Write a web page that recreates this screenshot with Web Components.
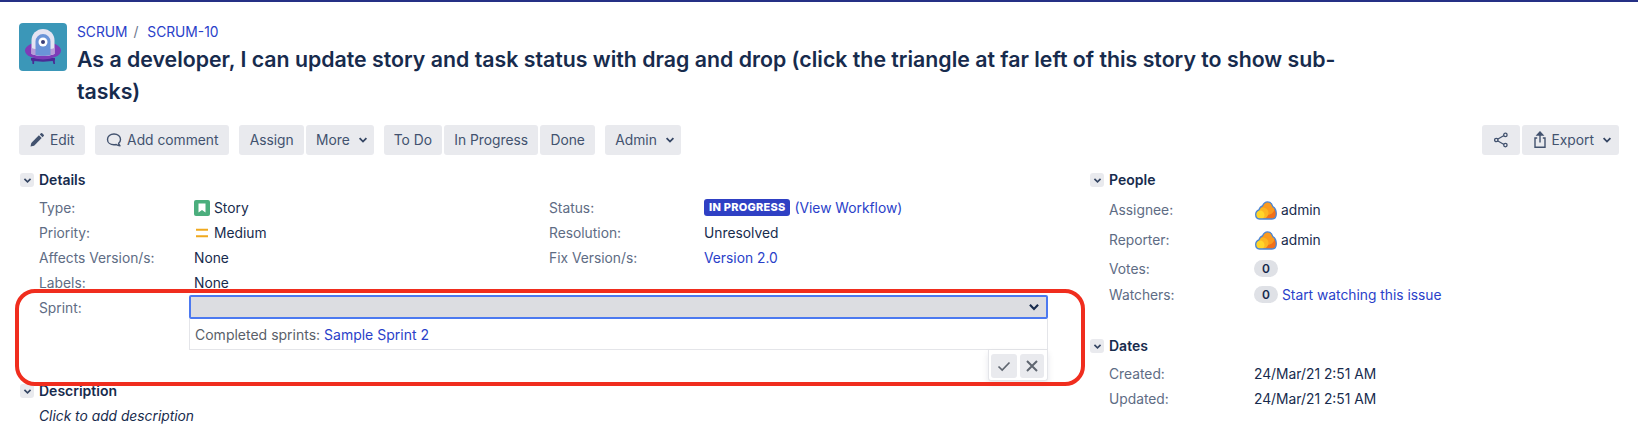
<!DOCTYPE html>
<html lang="en">
<head>
<meta charset="UTF-8">
<title>SCRUM-10</title>
<style>
  html, body { margin: 0; background: #fff; }
  body {
    position: relative;
    height: 435px;
    overflow: hidden;
    font: 13.8px/20px Inter, "Liberation Sans", sans-serif;
    color: #172b4d;
  }
</style>
</head>
<body>
<issue-page>
  <issue-header project="SCRUM" issue="SCRUM-10">As a developer, I can update story and task status with drag and drop (click the triangle at far left of this story to show sub-tasks)</issue-header>

  <issue-toolbar>
    <op-group>
      <op-button icon="edit">Edit</op-button>
    </op-group>
    <op-group>
      <op-button icon="comment">Add comment</op-button>
    </op-group>
    <op-group>
      <op-button>Assign</op-button>
      <op-button caret>More</op-button>
    </op-group>
    <op-group>
      <op-button>To Do</op-button>
      <op-button>In Progress</op-button>
      <op-button>Done</op-button>
    </op-group>
    <op-group>
      <op-button caret>Admin</op-button>
    </op-group>
    <op-group slot="right">
      <op-button icon="share"></op-button>
      <op-button icon="export" caret>Export</op-button>
    </op-group>
  </issue-toolbar>

  <issue-columns>
    <div>
      <issue-module heading="Details">
        <detail-grid>
          <field-row label="Type:"><type-icon kind="story"></type-icon>Story</field-row>
          <field-row label="Status:" wide><status-lozenge>IN PROGRESS</status-lozenge><issue-link>(View Workflow)</issue-link></field-row>
          <field-row label="Priority:"><type-icon kind="medium"></type-icon>Medium</field-row>
          <field-row label="Resolution:" wide>Unresolved</field-row>
          <field-row label="Affects Version/s:">None</field-row>
          <field-row label="Fix Version/s:" wide><issue-link>Version 2.0</issue-link></field-row>
          <field-row label="Labels:">None</field-row>
          <span></span>
        </detail-grid>
        <sprint-editor></sprint-editor>
      </issue-module>
      <issue-module heading="Description" class="desc">
        <description-text>Click to add description</description-text>
      </issue-module>
    </div>
    <div>
      <issue-module heading="People">
        <people-list>
          <field-row label="Assignee:" side h="30"><user-avatar></user-avatar>admin</field-row>
          <field-row label="Reporter:" side h="30"><user-avatar></user-avatar>admin</field-row>
          <field-row label="Votes:" side h="27"><count-badge>0</count-badge></field-row>
          <field-row label="Watchers:" side><count-badge>0</count-badge><issue-link>Start watching this issue</issue-link></field-row>
        </people-list>
      </issue-module>
      <issue-module heading="Dates" class="dates">
        <field-row label="Created:" side>24/Mar/21 2:51 AM</field-row>
        <field-row label="Updated:" side>24/Mar/21 2:51 AM</field-row>
      </issue-module>
    </div>
  </issue-columns>
</issue-page>
<red-highlight></red-highlight>

<script>
"use strict";
const chevron = '<svg width="10" height="10" viewBox="0 0 10 10"><path d="M1.6 3.2 5 6.6l3.4-3.4" fill="none" stroke="currentColor" stroke-width="1.8"/></svg>';
const cloudPath = "M4.5 18C2 18 .7 16 .7 13.5.7 11 2.3 9.4 4 8.8 4.6 6.8 5.8 5.4 7.5 5 8.5 2.4 10.4.9 12.6.9c2.6 0 4.4 1.7 5.2 4.7 2.200 1.200 3.500 4 3.500 7.200 0 3.200-1.700 5.200-4.300 5.200z";
const icons = {
  edit: '<svg width="16" height="16" viewBox="0 0 16 16"><path d="M1.5 14.5l.8-3.6 7.6-7.6 2.8 2.8-7.6 7.6z" fill="#42526e"/><path d="M10.8 2.4l1.1-1.1a.9.9 0 0 1 1.3 0l1.5 1.5a.9.9 0 0 1 0 1.3l-1.1 1.1z" fill="#42526e"/></svg>',
  comment: '<svg width="16" height="16" viewBox="0 0 16 16"><path d="M8 2c3.7 0 6.5 2.4 6.500 5.500 0 1.600-.7 2.900-1.900 3.800.2.900.7 1.700 1.400 2.400-1.400 0-2.700-.4-3.800-1.200-.7.2-1.400.3-2.200.3-3.700 0-6.500-2.200-6.500-5.300S4.300 2 8 2z" fill="none" stroke="#42526e" stroke-width="1.4" stroke-linejoin="round"/></svg>',
  share: '<svg width="16" height="16" viewBox="0 0 16 16" fill="none" stroke="#42526e" stroke-width="1.3"><path d="M4.500 7.200 11 3.500M4.500 8.800 11 12.500"/><circle cx="3.300" cy="8" r="1.700"/><circle cx="12.400" cy="2.900" r="1.700"/><circle cx="12.400" cy="13.100" r="1.700"/></svg>',
  export: '<svg width="16" height="18" viewBox="0 0 16 18" fill="none" stroke="#42526e" stroke-width="1.4"><path d="M5.200 7H3v9.300h10V7h-2.200"/><path d="M8 11.500V2"/><path d="M8 1 5.200 4h5.600z" fill="#42526e"/></svg>'
};

function define(name, html, setup) {
  customElements.define(name, class extends HTMLElement {
    constructor() {
      super();
      this.attachShadow({ mode: "open" });
    }
    connectedCallback() {
      this.shadowRoot.innerHTML = typeof html === "function" ? html(this) : html;
      if (setup) setup(this);
    }
  });
}

define("issue-page", `
  <style>:host { display: block; border-top: 2px solid #253085; padding: 0 19px; }</style>
  <slot></slot>`);

define("issue-header", el => `
  <style>
    :host { display: flex; gap: 10px; padding-top: 21px; height: 102px; box-sizing: content-box; }
    svg { flex: none; display: block; }
    .crumbs { line-height: 17px; color: #6b778c; padding-top: 1px; }
    a { color: #2a3fc9; text-decoration: none; }
    .sep { margin: 0 5px 0 2px; }
    h1 { margin: 2px 0 0; max-width: 1275px; font-size: 21.3px; line-height: 32px; font-weight: 600; color: #172b4d; }
  </style>
  <svg width="48" height="48" viewBox="0 0 48 48">
    <rect width="48" height="48" rx="4" fill="#3b97b8"/>
    <path d="M13 35h2.500l-.5 6h-1.500zM33 35h2.500l.5 6h-1.500z" fill="#4a2a96"/>
    <path d="M12 35h24v2.500c-7 1.500-17 1.500-24 0z" fill="#4a2a96"/>
    <ellipse cx="24" cy="27.500" rx="18" ry="9" fill="#7e3cb8"/>
    <path d="M12.500 31V17.500a11.500 11.500 0 0 1 23 0V31c-6 2.500-17 2.500-23 0z" fill="#e4e4f2"/>
    <path d="M12.500 25c6 2 17 2 23 0v6c-6 2.500-17 2.500-23 0z" fill="#b79cd8"/>
    <path d="M16.500 32V18.500a7.500 7.500 0 0 1 15 0V32c-4 1-11 1-15 0z" fill="#6a94d8"/>
    <circle cx="24" cy="19" r="4.500" fill="#fff"/>
    <circle cx="24" cy="19" r="2" fill="#3c3f78"/>
  </svg>
  <div>
    <div class="crumbs"><a>SCRUM</a><span class="sep"> /</span> <a>${el.getAttribute("issue")}</a></div>
    <h1><slot></slot></h1>
  </div>`);

define("issue-toolbar", `
  <style>
    :host { display: flex; gap: 10px; height: 30px; }
    .right { margin-left: auto; display: flex; }
  </style>
  <slot></slot>
  <div class="right"><slot name="right"></slot></div>`);

define("op-group", `
  <style>:host { display: flex; gap: 2px; }</style>
  <slot></slot>`);

define("op-button", el => {
  const icon = icons[el.getAttribute("icon")] || "";
  return `
  <style>
    :host { display: flex; align-items: center; gap: 4px; height: 30px; padding: 0 10.2px; background: #e9eaee; border-radius: 3px; color: #42526e; white-space: nowrap; }
    :host([icon="edit"]) { gap: 5px; padding: 0 10.5px 0 10px; }
    :host([icon="comment"]) { gap: 5px; padding: 0 11px 0 11px; }
    :host([icon="share"]) { padding: 0 11px; }
    :host([icon="export"]) { gap: 4px; padding: 0 10px; }
    svg { display: block; flex: none; }
    .caret { margin-left: 4px; color: #344563; height: 10px; margin-right: -4.5px; }
    :host([icon="export"]) .caret { margin-right: -3px; }
  </style>
  ${icon}<slot></slot>${el.hasAttribute("caret") ? `<span class="caret">${chevron}</span>` : ""}`;
});

define("issue-columns", `
  <style>:host { display: grid; grid-template-columns: 1029px 1fr; column-gap: 41px; padding-top: 17px; }</style>
  <slot></slot>`);

define("issue-module", el => `
  <style>
    :host { display: block; }
    :host(.dates) { margin-top: 31px; }
    .head { display: flex; align-items: center; gap: 5px; height: 16px; font-size: 14px; font-weight: 600; color: #172b4d; margin-bottom: 7px; }
    .tog { width: 14px; height: 14px; margin-left: 1px; border-radius: 3px; background: #e9eaee; display: flex; align-items: center; justify-content: center; color: #344563; }
    .tog svg { display: block; width: 9px; height: 9px; }
  </style>
  <div class="head"><span class="tog">${chevron}</span>${el.getAttribute("heading")}</div>
  <slot></slot>`);

define("detail-grid", `
  <style>:host { display: grid; grid-template-columns: 530px 1fr; }</style>
  <slot></slot>`);

define("people-list", `
  <style>:host { display: block; margin-top: 5px; }</style>
  <slot></slot>`);

define("field-row", el => {
  const side = el.hasAttribute("side");
  const width = side ? 145 : 155;
  const pad = el.hasAttribute("wide") ? 0 : 20;
  const h = el.getAttribute("h") || 25;
  return `
  <style>
    :host { display: flex; align-items: center; height: ${h}px; padding-left: ${pad}px; white-space: nowrap; }
    .l { flex: none; width: ${width}px; color: #5e6c84; }
    .v { display: flex; align-items: center; color: #172b4d; }
  </style>
  <span class="l">${el.getAttribute("label")}</span><span class="v"><slot></slot></span>`;
});

define("type-icon", el => `
  <style>:host { display: inline-flex; width: 16px; height: 16px; margin-right: 4px; } svg { display: block; }</style>
  ${el.getAttribute("kind") === "story"
    ? '<svg width="16" height="16" viewBox="0 0 16 16"><rect width="16" height="16" rx="2" fill="#4bae7d"/><path d="M4.5 3.5h7v9L8 10l-3.5 2.500z" fill="#fff"/></svg>'
    : '<svg width="16" height="16" viewBox="0 0 16 16"><path d="M2 4.700h12M2 11.300h12" stroke="#f0a91f" stroke-width="2"/></svg>'}`);

define("status-lozenge", `
  <style>:host { display: inline-block; background: #2f40c4; color: #fff; font-size: 11px; font-weight: 800; line-height: 17px; padding: 0 5px; border-radius: 3px; margin-right: 4px; letter-spacing: .25px; }</style>
  <slot></slot>`);

define("issue-link", `
  <style>:host { color: #2a3fc9; }</style>
  <slot></slot>`);

define("count-badge", `
  <style>:host { display: inline-block; box-sizing: border-box; width: 24px; height: 17px; line-height: 17px; border-radius: 9px; background: #dfe1e6; color: #172b4d; font-size: 12px; font-weight: 600; text-align: center; margin-right: 4px; }</style>
  <slot></slot>`);

define("user-avatar", `
  <style>:host { display: inline-flex; margin: 0 4px 0 1px; } svg { display: block; }</style>
  <svg width="22" height="19" viewBox="0 0 22 19">
    <defs><clipPath id="c"><path d="${cloudPath}"/></clipPath></defs>
    <g clip-path="url(#c)">
      <rect width="22" height="19" fill="#f0701a"/>
      <circle cx="12.5" cy="7" r="7" fill="#fb9a1e"/>
      <circle cx="8" cy="12" r="5.5" fill="#fcb622"/>
      <circle cx="5" cy="14" r="4.5" fill="#ffd52a"/>
    </g>
    <path d="${cloudPath}" fill="none" stroke="#4a86d6" stroke-width="1.3"/>
  </svg>`);

define("sprint-editor", `
  <style>
    :host { display: grid; grid-template-columns: 150px 1fr; padding-left: 20px; position: relative; height: 88px; }
    .l { color: #5e6c84; line-height: 27px; }
    .select { box-sizing: border-box; height: 24px; background: #dcdde1; border: 2px solid #4c79f0; border-radius: 2px; display: flex; align-items: center; justify-content: flex-end; padding-right: 6px; color: #172b4d; }
    .select svg { display: block; }
    .hint { box-sizing: border-box; height: 31px; border: 1px solid #e4e5e9; border-top: 0; padding: 6px 5px; color: #5a5f69; font-size: 14px; }
    a { color: #2a3fc9; }
    .actions { position: absolute; right: 0; top: 55px; width: 60px; height: 31px; box-sizing: border-box; background: #fff; border: 1px solid #e4e5e9; border-top: 0; border-radius: 0 0 3px 3px; box-shadow: 0 3px 6px rgba(9,30,66,.1); display: flex; gap: 3px; padding: 4px 2px 0 2px; }
    .actions span { display: flex; align-items: center; justify-content: center; width: 24px; height: 24px; background: #e9eaee; border-radius: 3px; }
    .actions span:first-child { width: 26px; }
  </style>
  <span class="l">Sprint:</span>
  <div>
    <div class="select"><svg width="12" height="12" viewBox="0 0 10 10"><path d="M1.6 3.2 5 6.6l3.4-3.4" fill="none" stroke="currentColor" stroke-width="1.8"/></svg></div>
    <div class="hint">Completed sprints: <a>Sample Sprint 2</a></div>
  </div>
  <div class="actions">
    <span><svg width="14" height="14" viewBox="0 0 14 14"><path d="M1.5 7.5 5.2 11l7.3-7.5" fill="none" stroke="#5f6670" stroke-width="1.7"/></svg></span>
    <span><svg width="14" height="14" viewBox="0 0 14 14"><path d="M2 2l10 10M12 2 2 12" fill="none" stroke="#5f6670" stroke-width="2"/></svg></span>
  </div>`);

define("description-text", `
  <style>:host { display: block; padding-left: 20px; font-style: italic; color: #172b4d; }</style>
  <slot></slot>`);

define("red-highlight", `
  <style>:host { position: absolute; left: 15px; top: 289px; width: 1070px; height: 96.5px; box-sizing: border-box; border: 4px solid #f02d1e; border-radius: 20px; pointer-events: none; }</style>`);
</script>
</body>
</html>
